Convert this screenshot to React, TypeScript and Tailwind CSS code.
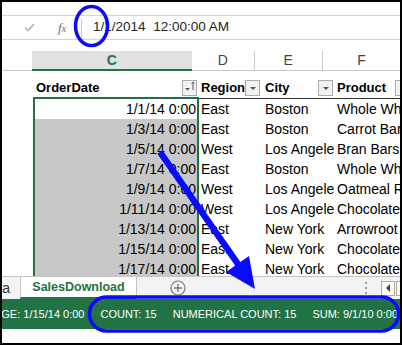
const ROWS = [
  ['1/1/14 0:00', 'East', 'Boston', 'Whole Wheat'],
  ['1/3/14 0:00', 'East', 'Boston', 'Carrot Bars'],
  ['1/5/14 0:00', 'West', 'Los Angeles', 'Bran Bars'],
  ['1/7/14 0:00', 'East', 'Boston', 'Whole Wheat'],
  ['1/9/14 0:00', 'West', 'Los Angeles', 'Oatmeal Raisin'],
  ['1/11/14 0:00', 'West', 'Los Angeles', 'Chocolate Chip'],
  ['1/13/14 0:00', 'East', 'New York', 'Arrowroot'],
  ['1/15/14 0:00', 'East', 'New York', 'Chocolate Chip'],
  ['1/17/14 0:00', 'East', 'New York', 'Chocolate Chip'],
];

function FilterButton({ sorted = false }: { sorted?: boolean }) {
  return (
    <div className="w-[15px] h-[16px] shrink-0 border border-[#ababab] bg-[#f2f2f2] flex items-end justify-center pb-[3px]">
      <svg width="13" height="12" viewBox="0 0 13 12">
        <path d={sorted ? 'M2 8 L7 8 L4.5 10.5 Z' : 'M4 7 L10 7 L7 10 Z'} fill="#555" />
        {sorted && <path d="M10 2 L10 10 M8.5 3.5 L10 2 L11.5 3.5" stroke="#555" strokeWidth="1" fill="none" />}
      </svg>
    </div>
  );
}

function Annotations() {
  return (
    <svg className="absolute inset-0 pointer-events-none" width="402" height="345" viewBox="0 0 402 345">
      <ellipse cx="91.5" cy="26" rx="16" ry="19.5" fill="none" stroke="#0a0aff" strokeWidth="3.5" />
      <line x1="160" y1="152" x2="240" y2="267" stroke="#0a0aff" strokeWidth="6.5" />
      <polygon points="255,289 249,256 226,272" fill="#0a0aff" />
      <rect x="89.5" y="297" width="309" height="34" rx="17" fill="none" stroke="#0a0aff" strokeWidth="3.5" />
    </svg>
  );
}

export default function App() {
  return (
    <div className="relative w-[402px] h-[345px] overflow-hidden bg-white font-['Liberation_Sans',Arial,sans-serif]">
      <div className="h-full border-2 border-black flex flex-col overflow-hidden">
        {/* ribbon edge */}
        <div className="h-[14px] shrink-0 border-b border-[#d4d4d4]" />

        {/* formula bar */}
        <div className="h-[24px] shrink-0 border-b border-[#d4d4d4] flex items-center">
          <svg className="ml-[22px]" width="11" height="9" viewBox="0 0 11 9">
            <path d="M1 4.5 L4 7.5 L10 1" stroke="#b4b4b4" strokeWidth="1.6" fill="none" />
          </svg>
          <span className="ml-[23px] text-[13px] italic text-[#707070] font-['Liberation_Serif',serif] leading-none">
            f<span className="text-[10px]">x</span>
          </span>
          <div className="ml-[15px] w-px h-[18px] bg-[#c8c8c8]" />
          <span className="ml-[11px] text-[13.5px] text-[#262626] whitespace-pre">1/1/2014  12:00:00 AM</span>
        </div>

        <div className="h-[11px] shrink-0" />

        {/* column headers */}
        <div className="h-[20px] shrink-0 flex text-[14px] text-[#444]">
          <div className="w-[31px] border-b border-[#c8c8c8]" />
          <div className="w-[166px] bg-[#e1e1e1] border-b-2 border-[#217346] flex items-center justify-center font-bold text-[#217346]">C</div>
          <div className="w-[64px] border-b border-[#c8c8c8] flex items-center justify-center">D</div>
          <div className="w-[71px] border-l border-b border-[#c8c8c8] flex items-center justify-center">E</div>
          <div className="w-[78px] shrink-0 border-l border-b border-[#c8c8c8] flex items-center justify-center">F</div>
        </div>

        {/* sheet */}
        <div className="flex-1 min-h-0 flex overflow-hidden text-[14px] text-black">
          <div className="w-[31px] shrink-0" />

          <div className="w-[166px] shrink-0 flex flex-col pt-[7px]">
            <div className="h-[19px] shrink-0 flex items-center pl-[3px] pr-[2px]">
              <span className="font-bold text-[13px]">OrderDate</span>
              <div className="ml-auto">
                <FilterButton sorted />
              </div>
            </div>
            <div className="shrink-0 border-2 border-b-0 border-[#217346]">
              {ROWS.map((r, i) => (
                <div key={i} className={`h-[20px] flex items-center justify-end pr-px ${i === 0 ? 'bg-white' : 'bg-[#c8c8c8]'}`}>
                  {r[0]}
                </div>
              ))}
            </div>
          </div>

          <div className="w-[64px] shrink-0 flex flex-col pt-[7px]">
            <div className="h-[21px] shrink-0 flex items-center pl-[2px] pr-[3px] border-b border-[#333]">
              <span className="font-bold text-[13px]">Region</span>
              <div className="ml-auto">
                <FilterButton />
              </div>
            </div>
            {ROWS.map((r, i) => (
              <div key={i} className="h-[20px] shrink-0 flex items-center pl-[2px]">{r[1]}</div>
            ))}
          </div>

          <div className="w-[71px] shrink-0 flex flex-col pt-[7px]">
            <div className="h-[21px] shrink-0 flex items-center pl-[2px] pr-px border-b border-[#333]">
              <span className="font-bold text-[13px]">City</span>
              <div className="ml-auto">
                <FilterButton />
              </div>
            </div>
            {ROWS.map((r, i) => (
              <div key={i} className="h-[20px] shrink-0 flex items-center pl-[2px] overflow-hidden whitespace-nowrap">{r[2]}</div>
            ))}
          </div>

          <div className="w-[90px] shrink-0 flex flex-col pt-[7px]">
            <div className="h-[21px] shrink-0 flex items-center pl-[3px] border-b border-[#333]">
              <span className="font-bold text-[13px]">Product</span>
              <div className="ml-[9px]">
                <FilterButton />
              </div>
            </div>
            {ROWS.map((r, i) => (
              <div key={i} className="h-[20px] shrink-0 flex items-center pl-[3px] whitespace-nowrap">{r[3]}</div>
            ))}
          </div>
        </div>

        {/* sheet tabs */}
        <div className="h-[23px] shrink-0 border-t border-[#c6c6c6] bg-[#f3f3f3] flex items-stretch">
          <div className="w-[18px] shrink-0 overflow-hidden flex items-center justify-end pr-[10px] text-[14px] text-[#333]">
            <span className="whitespace-nowrap">Data</span>
          </div>
          <div className="w-[117px] shrink-0 bg-white border-x border-[#c6c6c6] border-b-2 border-b-[#217346] flex items-center justify-center font-bold text-[12.5px] text-[#217346]">
            SalesDownload
          </div>
          <div className="ml-[33px] flex items-center">
            <svg width="16" height="16" viewBox="0 0 16 16">
              <circle cx="8" cy="8" r="7" fill="none" stroke="#7a7a7a" strokeWidth="1.2" />
              <path d="M8 4 V12 M4 8 H12" stroke="#7a7a7a" strokeWidth="1.4" />
            </svg>
          </div>
          <div className="ml-auto flex items-center">
            <div className="flex flex-col gap-[3px]">
              <div className="w-[2px] h-[2px] bg-[#9a9a9a]" />
              <div className="w-[2px] h-[2px] bg-[#9a9a9a]" />
              <div className="w-[2px] h-[2px] bg-[#9a9a9a]" />
            </div>
            <div className="ml-[14px] w-[14px] h-[15px] border border-[#ababab] bg-[#fafafa] flex items-center justify-center">
              <svg width="6" height="8" viewBox="0 0 6 8">
                <path d="M5 0 L1 4 L5 8 Z" fill="#444" />
              </svg>
            </div>
            <div className="ml-[1px] w-[4px] h-[15px] border-y border-l border-[#ababab] bg-[#fafafa]" />
          </div>
        </div>

        {/* status bar */}
        <div className="h-[30px] shrink-0 bg-[#217346] flex items-center justify-end gap-[16px] pr-[2px] overflow-hidden text-[11px] text-white whitespace-nowrap">
          <span>AVERAGE: 1/15/14 0:00</span>
          <span>COUNT: 15</span>
          <span>NUMERICAL COUNT: 15</span>
          <span>SUM: 9/1/10 0:00</span>
        </div>

        <div className="h-[14px] shrink-0" />
      </div>
      <Annotations />
    </div>
  );
}
